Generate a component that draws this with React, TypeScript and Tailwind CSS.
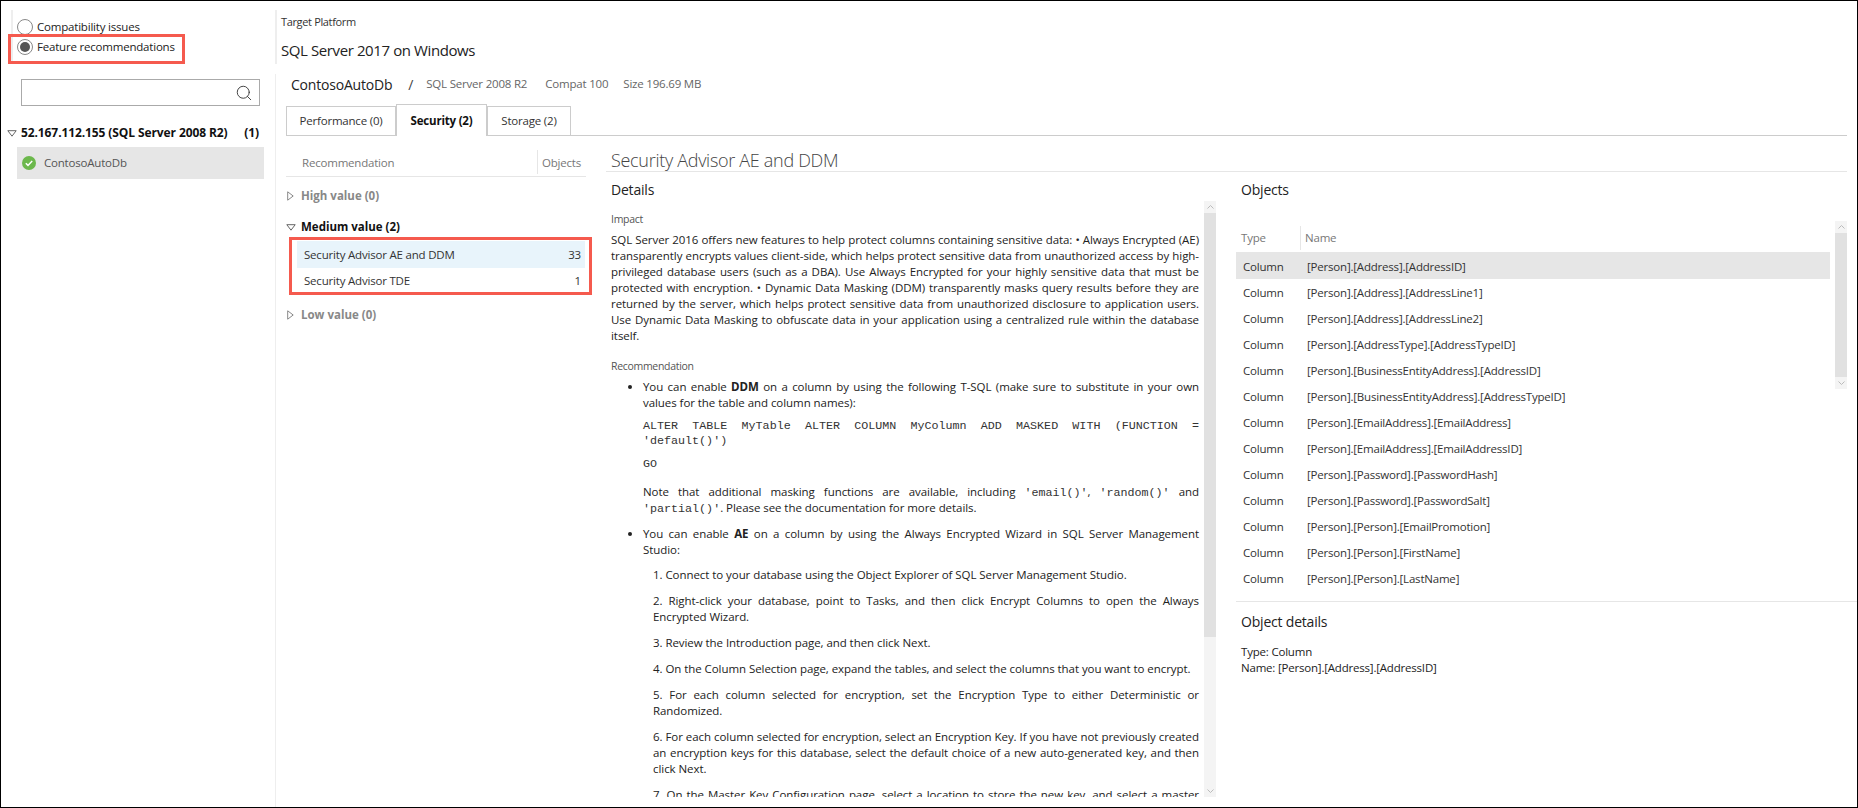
import React from "react";
import { Search } from "lucide-react";

const objects = [
  "[Person].[Address].[AddressID]",
  "[Person].[Address].[AddressLine1]",
  "[Person].[Address].[AddressLine2]",
  "[Person].[AddressType].[AddressTypeID]",
  "[Person].[BusinessEntityAddress].[AddressID]",
  "[Person].[BusinessEntityAddress].[AddressTypeID]",
  "[Person].[EmailAddress].[EmailAddress]",
  "[Person].[EmailAddress].[EmailAddressID]",
  "[Person].[Password].[PasswordHash]",
  "[Person].[Password].[PasswordSalt]",
  "[Person].[Person].[EmailPromotion]",
  "[Person].[Person].[FirstName]",
  "[Person].[Person].[LastName]",
];

const Caret = ({ open }: { open: boolean }) =>
  open ? (
    <svg width="10" height="7" viewBox="0 0 10 7" className="shrink-0">
      <path d="M.8.7h8.4L5 6.2z" fill="none" stroke="#666" />
    </svg>
  ) : (
    <svg width="7" height="10" viewBox="0 0 7 10" className="shrink-0">
      <path d="M.7.8v8.4L6.2 5z" fill="none" stroke="#888" />
    </svg>
  );

const Radio = ({ checked, label }: { checked?: boolean; label: string }) => (
  <div className="flex h-5 items-center gap-[4px]">
    <span className="flex h-4 w-4 items-center justify-center rounded-full border border-[#888]">
      {checked && <span className="h-[10px] w-[10px] rounded-full bg-[#555]" />}
    </span>
    <span className="text-[#222]">{label}</span>
  </div>
);

const Sidebar = () => (
  <aside className="flex w-[274px] shrink-0 flex-col">
    <div className="relative ml-[10px] mt-[9px] h-[54px] border-l-2 border-[#eee] pl-[4px] pt-[7px]">
      <Radio label="Compatibility issues" />
      <Radio checked label="Feature recommendations" />
      <div className="absolute left-[-5px] top-[24px] h-[30px] w-[177px] border-[3px] border-[#f55a4e]" />
    </div>
    <div className="ml-[20px] mt-[15px] flex h-[27px] w-[239px] items-center justify-end border border-[#aaa] pr-[6px]">
      <Search size={18} strokeWidth={1.2} className="text-[#333]" />
    </div>
    <div className="ml-[6px] mt-[17px] flex h-[20px] w-[252px] items-center text-[12px] font-bold tracking-[-0.1px] text-[#111]">
      <Caret open />
      <span className="ml-[4px] flex-1">52.167.112.155 (SQL Server 2008 R2)</span>
      <span>(1)</span>
    </div>
    <div className="ml-[16px] mt-[4px] flex h-[32px] w-[247px] items-center bg-[#e6e6e6] pl-[5px] text-[#555]">
      <svg width="14" height="14" viewBox="0 0 14 14">
        <circle cx="7" cy="7" r="7" fill="#6cb84c" />
        <path d="M3.8 7.2l2.2 2.2 4.2-4.4" fill="none" stroke="#fff" strokeWidth="1.5" />
      </svg>
      <span className="ml-[8px]">ContosoAutoDb</span>
    </div>
  </aside>
);

const Recommendations = () => (
  <div className="ml-[10px] w-[300px] shrink-0">
    <div className="flex h-[27px] items-start border-b border-[#e6e6e6] leading-[26px] text-[#777]">
      <span className="ml-[16px] flex-1">Recommendation</span>
      <span className="h-[24px] border-l border-[#e6e6e6] pl-[4px] pr-[5px]">Objects</span>
    </div>
    <div className="mt-[9px] flex h-5 items-center gap-[7px] pl-[1px] font-bold tracking-normal text-[#888]">
      <Caret open={false} /> High value (0)
    </div>
    <div className="mt-[11px] flex h-5 items-center gap-[5px] font-bold tracking-normal text-[#111]">
      <Caret open /> Medium value (2)
    </div>
    <div className="relative ml-[11px] mt-[4px] w-[288px] text-[#333]">
      <div className="flex h-[27px] items-center justify-between bg-[#e8f4fb] pl-[7px] pr-[4px]">
        <span>Security Advisor AE and DDM</span>
        <span>33</span>
      </div>
      <div className="flex h-[26px] items-center justify-between pl-[7px] pr-[4px]">
        <span>Security Advisor TDE</span>
        <span>1</span>
      </div>
      <div className="absolute bottom-[-1px] left-[-8px] right-[-7px] top-[-4px] border-[3px] border-[#f55a4e]" />
    </div>
    <div className="mt-[11px] flex h-5 items-center gap-[7px] pl-[1px] font-bold tracking-normal text-[#888]">
      <Caret open={false} /> Low value (0)
    </div>
  </div>
);

const Scrollbar = ({ thumb }: { thumb: string }) => (
  <div className="flex w-[12px] shrink-0 flex-col bg-[#f4f4f4]">
    <div className="flex h-[12px] items-center justify-center">
      <svg width="7" height="4" viewBox="0 0 7 4"><path d="M.5 3.5l3-3 3 3" fill="none" stroke="#bbb" /></svg>
    </div>
    <div className={thumb} />
    <div className="flex-1" />
    <div className="flex h-[12px] items-center justify-center">
      <svg width="7" height="4" viewBox="0 0 7 4"><path d="M.5.5l3 3 3-3" fill="none" stroke="#bbb" /></svg>
    </div>
  </div>
);

const Code = ({ children }: { children: React.ReactNode }) => (
  <span className="font-['Liberation_Mono',monospace] text-[11.7px] leading-none tracking-normal text-[#333]">{children}</span>
);

const Step = ({ children }: { children: React.ReactNode }) => (
  <p className="ml-[10px] mt-[10px] text-justify">{children}</p>
);

const Details = () => (
  <div className="flex h-[596px] w-[610px] shrink-0">
    <div className="h-full w-[598px] overflow-hidden pl-[5px] pr-[5px] leading-[16px] tracking-[-0.06px] text-[#222]">
      <p className="mt-[10px] h-[16px] text-[10.5px] tracking-[-0.3px] text-[#555]">Impact</p>
      <p className="mt-[5px] text-justify">
        SQL Server 2016 offers new features to help protect columns containing sensitive data: • Always Encrypted (AE)
        transparently encrypts values client-side, which helps protect sensitive data from unauthorized access by
        high-privileged database users (such as a DBA). Use Always Encrypted for your highly sensitive data that must be
        protected with encryption. • Dynamic Data Masking (DDM) transparently masks query results before they are
        returned by the server, which helps protect sensitive data from unauthorized disclosure to application users.
        Use Dynamic Data Masking to obfuscate data in your application using a centralized rule within the database
        itself.
      </p>
      <p className="mt-[14px] h-[16px] text-[10.5px] tracking-[-0.3px] text-[#555]">Recommendation</p>
      <ul className="ml-[32px] mt-[5px] list-disc">
        <li>
          <p className="text-justify">
            You can enable <b>DDM</b> on a column by using the following T-SQL (make sure to substitute in your own
            values for the table and column names):
          </p>
          <p className="mt-[7px] text-justify leading-[14px]">
            <Code>ALTER TABLE MyTable ALTER COLUMN MyColumn ADD MASKED WITH (FUNCTION = 'default()')</Code>
          </p>
          <p className="mt-[9px] leading-[14px]"><Code>GO</Code></p>
          <p className="mt-[13px] text-justify">
            Note that additional masking functions are available, including <Code>'email()'</Code>,{" "}
            <Code>'random()'</Code> and <Code>'partial()'</Code>. Please see the documentation for more details.
          </p>
        </li>
        <li className="mt-[10px]">
          <p className="-mb-px text-justify">
            You can enable <b>AE</b> on a column by using the Always Encrypted Wizard in SQL Server Management Studio:
          </p>
          <Step>1. Connect to your database using the Object Explorer of SQL Server Management Studio.</Step>
          <Step>2. Right-click your database, point to Tasks, and then click Encrypt Columns to open the Always Encrypted Wizard.</Step>
          <Step>3. Review the Introduction page, and then click Next.</Step>
          <Step>4. On the Column Selection page, expand the tables, and select the columns that you want to encrypt.</Step>
          <Step>5. For each column selected for encryption, set the Encryption Type to either Deterministic or Randomized.</Step>
          <Step>6. For each column selected for encryption, select an Encryption Key. If you have not previously created an encryption keys for this database, select the default choice of a new auto-generated key, and then click Next.</Step>
          <Step>7. On the Master Key Configuration page, select a location to store the new key, and select a master key source, and then click Next.</Step>
        </li>
      </ul>
    </div>
    <Scrollbar thumb="h-[424px] bg-[#e1e1e1]" />
  </div>
);

const Objects = () => (
  <div className="ml-[20px] flex flex-1 flex-col text-[#333]">
    <div className="h-[29px] pl-[5px] text-[14px] leading-[36px] text-[#222]">Objects</div>
    <div className="mt-[20px] flex h-[370px]">
      <div className="w-[594px] shrink-0 overflow-hidden">
        <div className="flex h-[31px] items-center pt-[3px] text-[#777]">
          <span className="w-[64px] pl-[5px]">Type</span>
          <span className="h-[24px] border-l border-[#e6e6e6] pl-[4px] leading-[24px]">Name</span>
        </div>
        {objects.map((name, i) => (
          <div key={name} className={`flex items-center pt-[2px] ${i === 0 ? "h-[27px] bg-[#e6e6e6]" : "h-[26px]"}`}>
            <span className="w-[71px] pl-[7px]">Column</span>
            <span>{name}</span>
          </div>
        ))}
      </div>
      <div className="ml-[5px]"><Scrollbar thumb="h-[144px] bg-[#e1e1e1]" /></div>
    </div>
    <div className="mt-[10px] border-t border-[#e6e6e6] pl-[5px] text-[#222]">
      <p className="mt-[10px] text-[14px] leading-[20px]">Object details</p>
      <p className="mt-[12px] leading-[16px]">Type: Column</p>
      <p className="leading-[16px]">Name: [Person].[Address].[AddressID]</p>
    </div>
  </div>
);

const Tab = ({ label, active, width }: { label: string; active?: boolean; width: string }) => (
  <div
    className={`flex items-center justify-center border border-b-0 border-[#ccc] bg-white ${width} ${
      active ? "relative z-10 -mb-px h-[32px] font-bold text-[#111]" : "h-[29px] text-[#333]"
    }`}
  >
    {label}
  </div>
);

const Main = () => (
  <main className="flex min-w-0 flex-1 flex-col">
    <div className="mt-[9px] h-[54px] border-l-2 border-[#eee] pl-[4px]">
      <p className="mt-[5px] text-[11px] leading-[14px] tracking-[-0.35px] text-[#333]">Target Platform</p>
      <p className="mt-[10px] text-[15px] leading-[22px] tracking-[-0.4px] text-[#222]">SQL Server 2017 on Windows</p>
    </div>
    <div className="mt-[10px] flex flex-1 flex-col border-l border-[#eee]">
      <div className="ml-[15px] flex h-[20px] items-center text-[#666]">
        <span className="text-[14px] text-[#222]">ContosoAutoDb</span>
        <span className="ml-[16px] text-[14px] text-[#444]">/</span>
        <span className="ml-[13px]">SQL Server 2008 R2</span>
        <span className="ml-[18px]">Compat 100</span>
        <span className="ml-[15px]">Size 196.69 MB</span>
      </div>
      <div className="mx-[10px] mt-[10px] flex h-[32px] items-end border-b border-[#ccc]">
        <Tab label="Performance (0)" width="w-[110px]" />
        <Tab label="Security (2)" width="w-[91px]" active />
        <Tab label="Storage (2)" width="w-[84px]" />
      </div>
      <div className="mt-[14px] flex flex-1">
        <Recommendations />
        <div className="ml-[20px] flex min-w-0 flex-1 flex-col">
          <div className="mr-[10px] h-[22px] border-b border-[#e6e6e6] pl-[5px] text-[18px] font-light leading-[21px] tracking-[-0.3px] text-[#444]">
            Security Advisor AE and DDM
          </div>
          <div className="flex flex-1">
            <div className="w-[610px] shrink-0">
              <div className="h-[29px] pl-[5px] text-[14px] leading-[36px] text-[#222]">Details</div>
              <Details />
            </div>
            <Objects />
          </div>
        </div>
      </div>
    </div>
  </main>
);

export default function App() {
  return (
    <div className="flex h-[808px] w-[1858px] overflow-hidden border border-black bg-white font-['Open_Sans',sans-serif] text-[11.5px] tracking-[-0.2px]">
      <Sidebar />
      <Main />
    </div>
  );
}
